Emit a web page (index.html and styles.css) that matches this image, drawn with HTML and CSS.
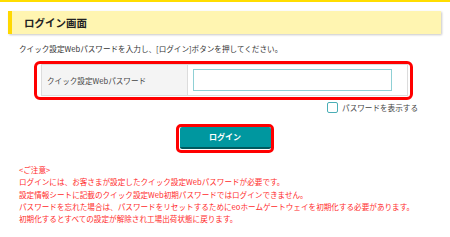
FILE: index.html
```html
<!DOCTYPE html>
<html lang="ja">
<head>
<meta charset="utf-8">
<title>ログイン画面</title>
<link rel="stylesheet" href="styles.css">
</head>
<body>
<div class="topbar"></div>
<main class="page">
  <h1 class="title">ログイン画面</h1>
  <p class="lead">クイック設定Webパスワードを入力し、[ログイン]ボタンを押してください。</p>
  <div class="hl-frame">
    <div class="field">
      <div class="field-label">クイック設定Webパスワード</div>
      <div class="field-value"><input class="pw-input" type="password"></div>
    </div>
  </div>
  <label class="show-pw"><span class="cb"></span><span class="cb-text">パスワードを表示する</span></label>
  <div class="btn-wrap">
    <div class="btn-frame"><button class="btn" type="button">ログイン</button></div>
  </div>
  <div class="notes">
    <p>&lt;ご注意&gt;</p>
    <p>ログインには、お客さまが設定したクイック設定Webパスワードが必要です。</p>
    <p>設定情報シートに記載のクイック設定Web初期パスワードではログインできません。</p>
    <p>パスワードを忘れた場合は、パスワードをリセットするためにeoホームゲートウェイを初期化する必要があります。</p>
    <p>初期化するとすべての設定が解除され工場出荷状態に戻ります。</p>
  </div>
</main>
</body>
</html>
```
FILE: styles.css
```css
* { box-sizing: border-box; }
html, body {
  margin: 0;
  padding: 0;
  background: #fff;
}
body {
  font-family: "Noto Sans CJK JP", "Noto Sans", sans-serif;
  font-size: 7.6px;
  color: #333;
  width: 450px;
  height: 237px;
  overflow: hidden;
}
.topbar {
  height: 2px;
  background: #ffdd00;
}
.page {
  padding: 9px 9px 0 8px;
}
.title {
  margin: 0;
  height: 23px;
  line-height: 23px;
  font-size: 10.5px;
  font-weight: bold;
  color: #222;
  background: #fff5b1;
  border-left: 4px solid #ffd800;
  padding-left: 12px;
  box-shadow: 1px 1px 2px rgba(0, 0, 0, 0.22);
}
.lead {
  margin: 9px 0 0 11px;
  line-height: 12px;
  white-space: nowrap;
}
.hl-frame {
  margin: 6px 0 0 26px;
  width: 379px;
  border: 3px solid #ff0000;
  border-radius: 6px;
  padding: 0 2px 1px 4px;
}
.field {
  display: flex;
  height: 32px;
  border: 1px solid #dcdcdc;
}
.field-label {
  width: 146px;
  background: #f4f4f4;
  border-right: 1px solid #dcdcdc;
  padding-left: 5px;
  display: flex;
  align-items: center;
  color: #444;
  white-space: nowrap;
}
.field-value {
  flex: 1;
  display: flex;
  align-items: center;
  padding-left: 5px;
}
.pw-input {
  width: 199px;
  height: 22px;
  margin: 0;
  padding: 0 4px;
  border: 1px solid #8fd0d5;
  border-radius: 0;
  background: #fff;
  outline: none;
}
.show-pw {
  display: flex;
  justify-content: flex-end;
  align-items: center;
  margin-top: 2px;
  padding-right: 23px;
  height: 10px;
  color: #444;
  white-space: nowrap;
}
.cb {
  width: 11px;
  height: 11px;
  border: 1px solid #4aaeb6;
  border-radius: 2px;
  background: #fff;
  margin-right: 4px;
}
.btn-wrap {
  display: flex;
  justify-content: center;
  margin-top: 12px;
}
.btn-frame {
  width: 98px;
  height: 29px;
  border: 3px solid #ff0000;
  border-radius: 5px;
  padding: 0 0 1px 1px;
}
.btn {
  display: block;
  width: 91px;
  height: 22px;
  margin: 0;
  padding: 0;
  border: 0;
  border-bottom: 2px solid #00595e;
  border-radius: 2px;
  background: #00979f;
  color: #fff;
  font-family: "Noto Sans CJK JP", "Noto Sans", sans-serif;
  font-size: 8px;
  font-weight: bold;
  line-height: 20px;
  text-align: center;
}
.notes {
  margin: 11px 0 0 11px;
  color: #ff2b2b;
  line-height: 12.3px;
}
.notes p {
  margin: 0;
  white-space: nowrap;
}
```
